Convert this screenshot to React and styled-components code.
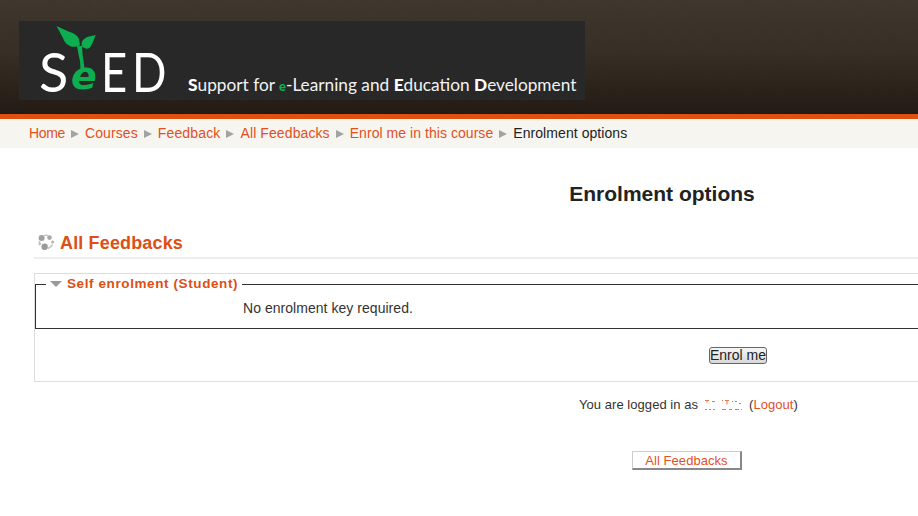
import React from "react";
import styled, { createGlobalStyle } from "styled-components";

const Global = createGlobalStyle`
  html, body { margin: 0; padding: 0; background: #fff; }
  body { font-family: "Liberation Sans", Arial, sans-serif; overflow: hidden; }
`;
const Page = styled.div`
  width: 918px;
  height: 516px;
  overflow: hidden;
  background: #fff;
`;
const Header = styled.header`
  height: 114px;
  box-sizing: border-box;
  padding: 21px 0 0 19px;
  background:
    repeating-linear-gradient(45deg, rgba(255, 255, 255, 0.007) 0 1px, transparent 1px 3px),
    linear-gradient(180deg, #3e372d 0%, #372e25 45%, #2c231b 75%, #221a14 100%);
`;
const Banner = styled.div`
  position: relative;
  width: 566px;
  height: 79px;
  background: #282828;
  display: flex;
  align-items: flex-end;
  box-sizing: border-box;
  padding-left: 20px;
`;
const LogoWord = styled.div`
  width: 129px;
  display: flex;
  align-items: baseline;
  height: 79px;
  line-height: 101px;
  font-family: Lato, sans-serif;
  font-size: 54px;
  font-weight: 400;
  color: #fff;
  white-space: nowrap;
`;
const LogoE = styled.span`
  font-family: "DejaVu Sans", sans-serif;
  font-style: italic;
  font-weight: 700;
  font-size: 38px;
  color: #0cae4f;
  width: 27px;
  margin: 0 4px 0 8px;
  text-align: center;
  transform: translateY(-3px);
`;
const LogoLetter = styled.span`
  display: inline-block;
  margin-left: ${(p) => p.$gap || 0}px;
  width: ${(p) => p.$width}px;
  transform: scaleX(0.84);
  transform-origin: left center;
`;
const LogoS = styled.span`
  width: 24px;
`;
const Sprout = styled.svg`
  position: absolute;
  left: 34px;
  top: 4px;
`;
const Tagline = styled.div`
  margin-left: 20px;
  padding-bottom: 2px;
  font-family: Lato, sans-serif;
  font-size: 17.25px;
  line-height: 24px;
  color: #f2f2f2;
  white-space: nowrap;
  b { font-weight: 900; color: #fff; }
  i { font-style: normal; font-weight: 900; font-size: 13px; color: #0cae4f; }
`;
const Stripe = styled.div`
  height: 5px;
  background: #e2500f;
`;
const Crumbs = styled.nav`
  height: 29px;
  box-sizing: border-box;
  padding: 0 0 2px 29px;
  background: #f7f5f0;
  display: flex;
  align-items: center;
  font-size: 14px;
  letter-spacing: 0.07px;
  color: #222;
  white-space: nowrap;
`;
const Crumb = styled.a`
  color: #e2501f;
  letter-spacing: ${(p) => p.$spacing}px;
`;
const Sep = styled.span`
  display: inline-block;
  width: 0;
  height: 0;
  margin: 2px 6px 0;
  border-left: 8px solid #a3a3a3;
  border-top: 4.5px solid transparent;
  border-bottom: 4.5px solid transparent;
`;
const Main = styled.main`
  width: 1324px;
  box-sizing: border-box;
  padding-left: 34px;
`;
const Title = styled.h2`
  margin: 33px 0 0 -34px;
  width: 1324px;
  font-size: 21px;
  line-height: 26px;
  font-weight: 700;
  text-align: center;
  color: #222;
`;
const CourseName = styled.h3`
  margin: 24px 0 0;
  height: 28px;
  box-sizing: border-box;
  border-bottom: 2px solid #eee;
  display: flex;
  align-items: flex-start;
  gap: 6px;
  padding-left: 4px;
  font-size: 18px;
  line-height: 24px;
  letter-spacing: 0.15px;
  font-weight: 700;
  color: #dd4f14;
`;
const CourseIcon = styled.svg`
  margin-top: 3px;
`;
const Box = styled.section`
  margin-top: 14px;
  height: 109px;
  box-sizing: border-box;
  border: 1px solid #ddd;
  border-right: 0;
  padding-top: 2px;
`;
const Field = styled.fieldset`
  margin: 0;
  height: 53px;
  box-sizing: border-box;
  padding: 0;
  border: 1px solid #333;
`;
const Legend = styled.legend`
  margin-left: 10px;
  padding: 0 4px;
  display: flex;
  align-items: center;
  gap: 5px;
  font-size: 13.5px;
  line-height: 16px;
  font-weight: 700;
  letter-spacing: 0.6px;
  color: #dd4f14;
`;
const Arrow = styled.span`
  width: 0;
  height: 0;
  border-top: 6px solid #999;
  border-left: 6px solid transparent;
  border-right: 6px solid transparent;
`;
const Note = styled.p`
  margin: 7px 0 0 207px;
  font-size: 14px;
  line-height: 18px;
  letter-spacing: 0.04px;
  color: #333;
`;
const ActionRow = styled.div`
  padding: 18px 0 0 674px;
`;
const EnrolButton = styled.button`
  display: block;
  width: 58px;
  height: 17px;
  padding: 0;
  border: 1px solid #666;
  border-radius: 3px;
  background: linear-gradient(180deg, #f6f6f6, #d8d8d8);
  font-family: "Liberation Sans", Arial, sans-serif;
  font-size: 14px;
  line-height: 15px;
  color: #222;
  white-space: nowrap;
`;
const LoginInfo = styled.div`
  margin-top: 15px;
  padding-left: 545px;
  display: flex;
  align-items: center;
  font-size: 13px;
  line-height: 16px;
  letter-spacing: 0.05px;
  color: #333;
  a { color: #e2501f; }
`;
const Masked = styled.svg`
  margin: 0 5px 0 6px;
`;
const HomeButton = styled.a`
  display: block;
  margin: 38px 0 0 598px;
  width: 110px;
  height: 19px;
  box-sizing: border-box;
  border: 1px solid #ccc;
  border-right: 2px solid #888;
  border-bottom: 2px solid #888;
  text-align: center;
  font-size: 13px;
  line-height: 17px;
  letter-spacing: 0.05px;
  color: #e2501f;
`;

const crumbs = [
  { label: "Home", spacing: -0.35 },
  { label: "Courses", spacing: 0.1 },
  { label: "Feedback", spacing: 0.15 },
  { label: "All Feedbacks", spacing: 0.1 },
  { label: "Enrol me in this course", spacing: 0.05 },
];

export default function App() {
  return (
    <Page>
      <Global />
      <Header>
        <Banner>
          <LogoWord>
            <LogoS>S</LogoS>
            <LogoE>e</LogoE>
            <LogoLetter $width={31}>E</LogoLetter>
            <LogoLetter $width={36}>D</LogoLetter>
          </LogoWord>
          <Sprout width="60" height="56" viewBox="0 0 60 56">
            <path d="M3.5 1 L16 6.7 C21 8 25 11 26 14 L27 20 C24 22 21 22 18.7 21.7 C14 20 11 17 10 13 Z" fill="#0cae4f" />
            <path d="M28.7 21 C28.5 18 29 16 30 15 C32 13 33 12.5 35 11.7 L42.7 10 C41.5 13 41 15 40 16.7 C39 19 38 21.5 36 23.3 C34 24 31.5 24 28.7 21 Z" fill="#0cae4f" />
            <path d="M24 21 C25 27 26 32 27 36 L27.5 44 L31.5 44 C31 37 30 33 29.5 29 L29 21 Z" fill="#0cae4f" />
          </Sprout>
          <Tagline>
            <b>S</b>upport for <i>e</i>-Learning and <b>E</b>ducation <b>D</b>evelopment
          </Tagline>
        </Banner>
      </Header>
      <Stripe />
      <Crumbs>
        {crumbs.map((c) => (
          <React.Fragment key={c.label}>
            <Crumb $spacing={c.spacing}>{c.label}</Crumb>
            <Sep />
          </React.Fragment>
        ))}
        <span>Enrolment options</span>
      </Crumbs>
      <Main>
        <Title>Enrolment options</Title>
        <CourseName>
          <CourseIcon width="16" height="16" viewBox="0 0 16 16">
            <path d="M6 1.6 Q8.5 0.8 10 1.6 M14.6 10.5 Q13 13 10 14.5 M1.6 7 Q1.2 9 2 11" stroke="#c4c4c4" strokeWidth="1.5" fill="none" />
            <circle cx="3.6" cy="4" r="3" fill="#a0a0a0" />
            <circle cx="11.5" cy="3.6" r="2.3" fill="#a8a8a8" />
            <circle cx="14.6" cy="8" r="1.5" fill="#b4b4b4" />
            <circle cx="6.6" cy="12.8" r="3.2" fill="#999" />
            <circle cx="1.8" cy="10" r="1.2" fill="#bbb" />
          </CourseIcon>
          All Feedbacks
        </CourseName>
        <Box>
          <Field>
            <Legend>
              <Arrow />
              Self enrolment (Student)
            </Legend>
            <Note>No enrolment key required.</Note>
          </Field>
          <ActionRow>
            <EnrolButton>Enrol me</EnrolButton>
          </ActionRow>
        </Box>
        <LoginInfo>
          You are logged in as
          <Masked width="40" height="12" viewBox="0 0 40 12">
            <path d="M1 1.5h4M3 1.5v2M8 2.5h3M1 10.5h2M5 10.5h2M9 10.5h2M18 1.5h1M21 1.5h4M23 1.5v4M28 2.5h1M31 2.5h2M35 4.5h2M18 10.5h4M25 10.5h3M31 10.5h4M37 10.5h1" stroke="#e9774a" strokeWidth="1" fill="none" />
          </Masked>
          <span>(<a>Logout</a>)</span>
        </LoginInfo>
        <HomeButton>All Feedbacks</HomeButton>
      </Main>
    </Page>
  );
}
